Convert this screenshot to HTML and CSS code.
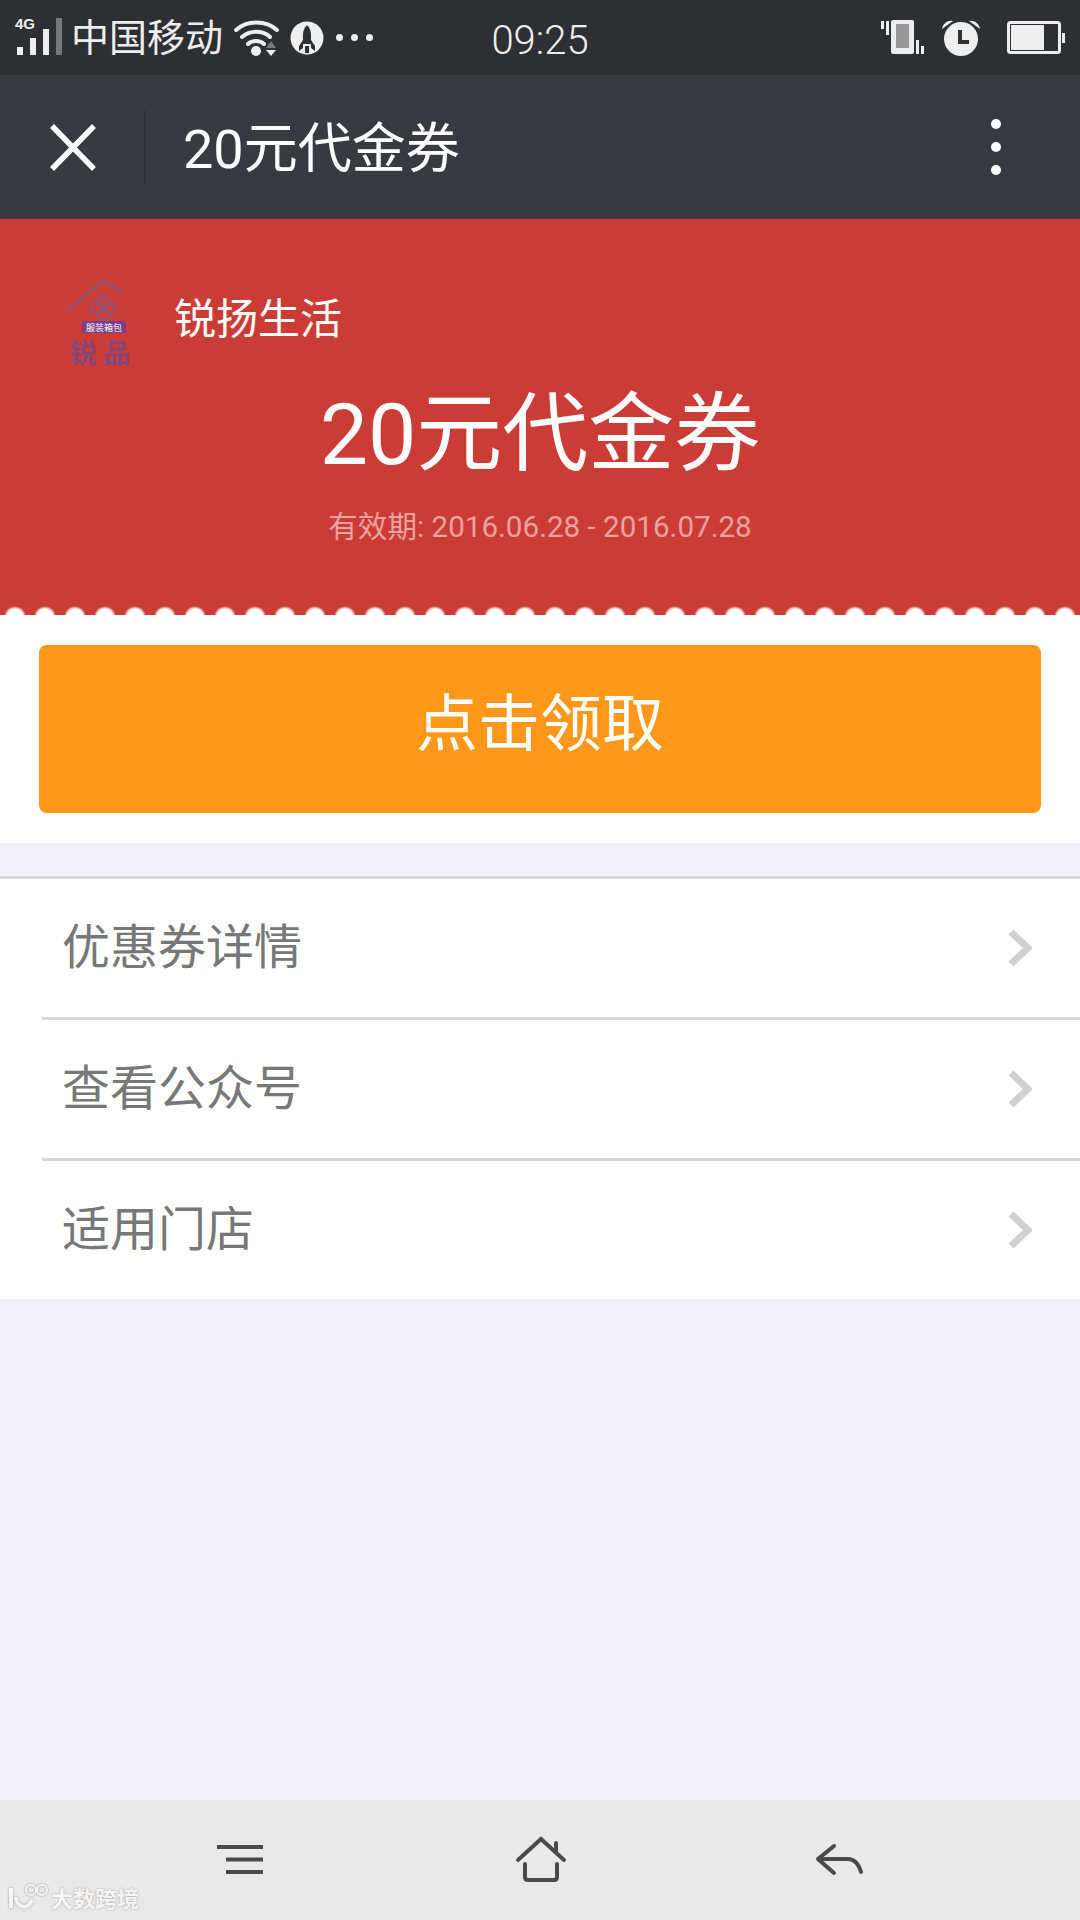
FILE: index.html
```html
<!DOCTYPE html>
<html lang="zh-CN">
<head>
    <meta charset="UTF-8">
    <meta name="viewport" content="width=device-width, initial-scale=1.0">
    <title>20元代金券</title>
    <link rel="stylesheet" href="styles.css">
</head>
<body>
    <div class="status-bar">
        <div class="status-left">
            <svg class="signal" width="64" height="50" viewBox="0 0 64 50">
                <text x="15" y="17" class="signal-label">4G</text>
                <rect x="17" y="35" width="6" height="8" fill="#eee"/>
                <rect x="30" y="26" width="6" height="17" fill="#eee"/>
                <rect x="43" y="17" width="6" height="26" fill="#eee"/>
                <rect x="56" y="6" width="6" height="37" fill="#777"/>
            </svg>
            <span class="carrier">中国移动</span>
            <svg class="wifi" width="46" height="40" viewBox="0 0 46 40">
                <g fill="none" stroke="#eee" stroke-width="4" stroke-linecap="round">
                    <path d="M2 12 C13 2 32 2 43 12"/>
                    <path d="M8 19 C16 12 29 12 36 19"/>
                    <path d="M14 26 C18 22 26 22 30 26"/>
                </g>
                <circle cx="22" cy="33" r="5" fill="#eee"/>
                <path d="M32 30 L37 23 L42 30 Z" fill="#777"/>
                <path d="M32 32 L42 32 L37 38 Z" fill="#eee"/>
            </svg>
            <svg class="rocket" width="34" height="34" viewBox="0 0 34 34">
                <circle cx="17" cy="17" r="16.5" fill="#eee"/>
                <path d="M17 4 C20 7 21 10 21 14 L21 23 L13 23 L13 14 C13 10 14 7 17 4 Z" fill="#2e2f33"/>
                <path d="M13 19 L9 25 L9 30 L13 27 Z M21 19 L25 25 L25 30 L21 27 Z M15 25 L19 25 L19 32 L15 32 Z" fill="#2e2f33"/>
            </svg>
            <div class="more-dots"><i></i><i></i><i></i></div>
        </div>
        <div class="status-time">09:25</div>
        <div class="status-right">
            <svg width="46" height="38" viewBox="0 0 46 38">
                <rect x="0" y="2" width="3" height="8" fill="#eee"/>
                <rect x="5" y="2" width="3" height="14" fill="#eee"/>
                <rect x="10" y="1" width="23" height="34" rx="2" fill="#eee"/>
                <rect x="15" y="5" width="13" height="24" fill="#999"/>
                <rect x="35" y="21" width="3" height="14" fill="#eee"/>
                <rect x="40" y="27" width="3" height="8" fill="#eee"/>
            </svg>
            <svg class="alarm" width="42" height="38" viewBox="0 0 42 38">
                <circle cx="21" cy="20" r="17" fill="#eee"/>
                <path d="M2 10 C3 4 8 1 13 2 Z M40 10 C39 4 34 1 29 2 Z" fill="#eee"/>
                <path d="M20 11 L20 23 L29 23" fill="none" stroke="#2e2f33" stroke-width="4"/>
            </svg>
            <svg class="battery" width="58" height="34" viewBox="0 0 58 34">
                <rect x="1.5" y="1.5" width="51" height="30" rx="2" fill="none" stroke="#eee" stroke-width="3"/>
                <rect x="4" y="4" width="33" height="25" fill="#eee"/>
                <rect x="55" y="12" width="3" height="10" fill="#eee"/>
            </svg>
        </div>
    </div>

    <div class="nav-bar">
        <svg class="nav-close" width="46" height="47" viewBox="0 0 46 47">
            <path d="M2 2 L44 45 M44 2 L2 45" stroke="#fff" stroke-width="5.5" fill="none"/>
        </svg>
        <div class="nav-divider"></div>
        <div class="nav-title">20元代金券</div>
        <div class="nav-menu"><i></i><i></i><i></i></div>
    </div>

    <div class="coupon">
        <div class="coupon-brand">
            <svg class="brand-logo" width="72" height="96" viewBox="0 0 72 96">
                <path d="M3 37 L41 6 L61 18" fill="none" stroke="#96506e" stroke-width="3"/>
                <g fill="none" stroke="#96506e" stroke-width="3">
                    <circle cx="41" cy="26" r="5"/>
                    <circle cx="34" cy="33" r="5"/>
                    <circle cx="48" cy="33" r="5"/>
                    <circle cx="41" cy="40" r="5"/>
                </g>
                <rect x="20" y="46" width="44" height="12" fill="#7a3f86"/>
                <text x="42" y="55.5" class="logo-label">服装箱包</text>
                <text x="38" y="88" class="logo-name">锐 品</text>
            </svg>
            <span class="brand-name">锐扬生活</span>
        </div>
        <div class="coupon-title">20元代金券</div>
        <div class="coupon-date">有效期: 2016.06.28 - 2016.07.28</div>
    </div>
    <div class="scallop"></div>

    <div class="action">
        <button class="get-btn">点击领取</button>
    </div>

    <div class="menu-list">
        <div class="menu-row"><span>优惠券详情</span><svg class="chevron" width="24" height="38" viewBox="0 0 24 38"><path d="M3 3 L20 19 L3 35" fill="none" stroke="#d0d0d0" stroke-width="7"/></svg></div>
        <div class="menu-row"><span>查看公众号</span><svg class="chevron" width="24" height="38" viewBox="0 0 24 38"><path d="M3 3 L20 19 L3 35" fill="none" stroke="#d0d0d0" stroke-width="7"/></svg></div>
        <div class="menu-row"><span>适用门店</span><svg class="chevron" width="24" height="38" viewBox="0 0 24 38"><path d="M3 3 L20 19 L3 35" fill="none" stroke="#d0d0d0" stroke-width="7"/></svg></div>
    </div>

    <div class="spacer"></div>

    <div class="bottom-bar">
        <svg class="key-menu" width="60" height="60" viewBox="0 0 60 60">
            <path d="M7 17 H53 M16 29.500 H53 M16 42 H53" stroke="#4a4a4a" stroke-width="4" fill="none"/>
        </svg>
        <svg class="key-home" width="60" height="60" viewBox="0 0 60 60">
            <path d="M7 30 L30 9 L53 30 M45 13 V22 M14 34 V47 Q14 50 17 50 H43 Q46 50 46 47 V34" stroke="#4a4a4a" stroke-width="4" stroke-linecap="round" fill="none"/>
        </svg>
        <svg class="key-back" width="60" height="60" viewBox="0 0 60 60">
            <path d="M25 16 L9 29 L25 43 M9 29 H39 Q48 29 52 42" stroke="#4a4a4a" stroke-width="4" stroke-linecap="round" stroke-linejoin="round" fill="none"/>
        </svg>
        <div class="watermark">
            <svg width="42" height="28" viewBox="0 0 42 28">
                <path d="M3 5 V25 M8 14 C8 24 20 28 24 17" fill="none" stroke="#f6f6f6" stroke-width="4"/>
                <circle cx="23" cy="7" r="5" fill="none" stroke="#f6f6f6" stroke-width="2"/>
                <circle cx="34" cy="7" r="5" fill="none" stroke="#f6f6f6" stroke-width="2"/>
            </svg>
            <span>大数跨境</span>
        </div>
    </div>
</body>
</html>
```

FILE: styles.css
```css
html, body {
    margin: 0;
    padding: 0;
    height: 100%;
}
body {
    position: relative;
    width: 1080px;
    height: 1920px;
    display: flex;
    flex-direction: column;
    overflow: hidden;
    background-color: #f0f0f6;
    font-family: Roboto, "Noto Sans CJK SC", sans-serif;
}

/* status bar */
.status-bar {
    height: 75px;
    display: grid;
    grid-template-columns: 1fr auto 1fr;
    align-items: center;
    background-color: #2e2f33;
    color: #eee;
}
.status-left {
    display: flex;
    align-items: center;
}
.signal {
    margin-top: -2px;
}
.signal-label {
    font-family: "Liberation Sans", sans-serif;
    font-size: 15px;
    font-weight: bold;
    fill: #eee;
}
.carrier {
    margin-left: 7px;
    font-size: 38px;
    line-height: 50px;
}
.wifi {
    margin-left: 11px;
}
.rocket {
    margin-left: 10px;
}
.more-dots {
    display: flex;
    gap: 8px;
    margin-left: 12px;
}
.more-dots i {
    width: 7px;
    height: 7px;
    border-radius: 50%;
    background-color: #eee;
}
.status-time {
    font-size: 40px;
    font-weight: 300;
    margin-top: 6px;
}
.status-right {
    display: flex;
    align-items: center;
    justify-content: flex-end;
}
.alarm {
    margin-left: 13px;
}
.battery {
    margin-left: 25px;
    margin-right: 15px;
}

/* nav */
.nav-bar {
    height: 144px;
    display: flex;
    align-items: center;
    background-color: #393a3f;
    color: #fff;
}
.nav-close {
    margin-left: 50px;
}
.nav-divider {
    width: 2px;
    height: 74px;
    margin-left: 48px;
    background-color: #303135;
}
.nav-title {
    margin-left: 37px;
    margin-top: -6px;
    font-size: 54px;
}
.nav-menu {
    display: flex;
    flex-direction: column;
    gap: 13px;
    margin-left: auto;
    margin-right: 79px;
}
.nav-menu i {
    width: 10px;
    height: 10px;
    border-radius: 50%;
    background-color: #fff;
}

/* coupon head */
.coupon {
    height: 387px;
    box-sizing: border-box;
    padding-top: 56px;
    background-color: #cc3c36;
    color: #fff;
}
.coupon-brand {
    display: flex;
    align-items: flex-start;
    height: 90px;
    padding-left: 62px;
}
.brand-logo {
    flex: none;
}
.logo-label {
    font-size: 9px;
    fill: #fff;
    text-anchor: middle;
}
.logo-name {
    font-size: 27px;
    font-weight: bold;
    fill: #86467a;
    text-anchor: middle;
}
.brand-name {
    margin-left: 40px;
    margin-top: 15px;
    font-size: 42px;
    line-height: 60px;
}
.coupon-title {
    margin-top: 15px;
    text-align: center;
    font-size: 86px;
    line-height: 110px;
}
.coupon-date {
    margin-top: 17px;
    text-align: center;
    font-size: 29.6px;
    line-height: 40px;
    color: #eba3a0;
}
.scallop {
    height: 9px;
    background-color: #cc3c36;
    background-image: radial-gradient(ellipse 11px 10px at 15px 10px, #fff 70%, #cc3c36 100%);
    background-size: 30px 9px;
    background-repeat: repeat-x;
}

/* receive button */
.action {
    padding: 30px 39px;
    background-color: #fff;
}
.get-btn {
    display: block;
    width: 100%;
    height: 168px;
    padding: 0 0 20px;
    border: none;
    border-radius: 8px;
    background-color: #ff971b;
    color: #fff;
    font-family: inherit;
    font-size: 62px;
}

/* menu */
.menu-list {
    margin-top: 33px;
    border-top: 3px solid #d6d6d6;
    background-color: #fff;
}
.menu-row {
    height: 138px;
    margin-left: 42px;
    padding-left: 20px;
    padding-right: 48px;
    display: flex;
    align-items: center;
    justify-content: space-between;
    border-bottom: 3px solid #d6d6d6;
    font-size: 48px;
    color: #777;
}
.menu-row span {
    margin-top: -10px;
}
.menu-row:last-child {
    border-bottom: none;
}

.spacer {
    flex: 1;
}

/* phone keys */
.bottom-bar {
    height: 120px;
    display: flex;
    align-items: center;
    background-color: #e9e9e9;
}
.key-menu {
    margin-left: 210px;
}
.key-home {
    margin-left: 241px;
}
.key-back {
    margin-left: 238px;
}
.watermark {
    position: absolute;
    left: 8px;
    bottom: 7px;
    display: flex;
    align-items: center;
    gap: 1px;
    font-size: 22px;
    font-weight: bold;
    color: #f6f6f6;
    text-shadow: 0 0 2px #999;
}
.watermark svg {
    filter: drop-shadow(0 0 1px #999);
}
```
